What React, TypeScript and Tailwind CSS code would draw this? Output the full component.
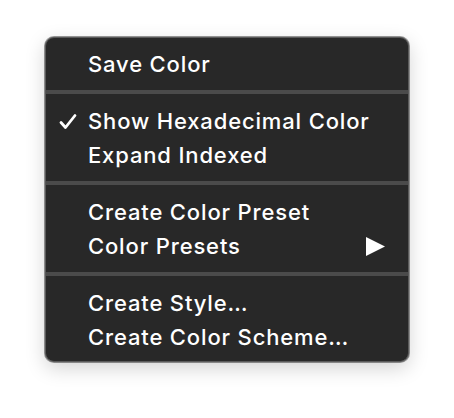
import React from "react"

type Item = { label: string; checked?: boolean; submenu?: boolean }

const groups: Item[][] = [
  [{ label: "Save Color" }],
  [{ label: "Show Hexadecimal Color", checked: true }, { label: "Expand Indexed" }],
  [{ label: "Create Color Preset" }, { label: "Color Presets", submenu: true }],
  [{ label: "Create Style…" }, { label: "Create Color Scheme…" }],
]

function Row({ item }: { item: Item }) {
  return (
    <div className="flex h-[34px] items-center text-[22px] font-medium leading-none text-white">
      <div className="flex w-[42px] shrink-0 justify-end pr-[11px]">
        {item.checked && (
          <svg width="18" height="17" viewBox="0 0 18 17">
            <path d="M2 9.5 L6.5 14.5 L16 2.5" fill="none" stroke="white" strokeWidth="2.8" strokeLinecap="round" strokeLinejoin="round" />
          </svg>
        )}
      </div>
      <span className="flex-1 tracking-[0.85px]">{item.label}</span>
      {item.submenu && (
        <svg className="mr-[23px]" width="19" height="19" viewBox="0 0 19 19">
          <polygon points="0,0 19,9.5 0,19" fill="white" />
        </svg>
      )}
    </div>
  )
}

export default function App() {
  return (
    <div className="h-[418px] w-[454px] bg-white pl-[45px] pt-[37px]" style={{ fontFamily: "Inter, 'Noto Sans', sans-serif" }}>
      <div className="w-[364px] rounded-[9px] border border-[#5a5a5a] bg-[#282828] pb-[7px] pt-[9px] shadow-[0_0_0_1px_rgba(0,0,0,0.4),0_6px_20px_rgba(0,0,0,0.18)]">
        {groups.map((group, i) => (
          <div key={i}>
            {i > 0 && <div className="mb-[10px] mt-[9px] h-[4px] bg-[#4b4b4b]" />}
            {group.map((item) => (
              <Row key={item.label} item={item} />
            ))}
          </div>
        ))}
      </div>
    </div>
  )
}
